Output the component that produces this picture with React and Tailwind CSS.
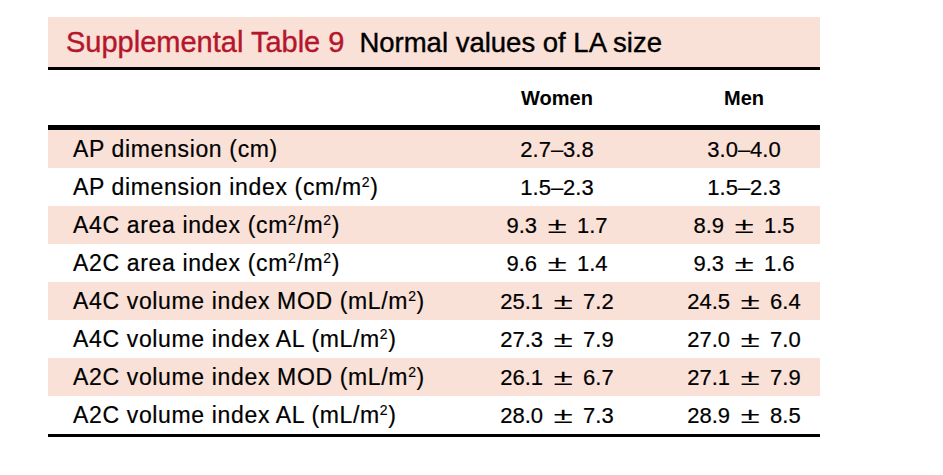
import React from 'react';

function Sup({ children }) {
  return <span className="relative -top-[8px] text-[14px] leading-none">{children}</span>;
}

// wide plus-minus sign, as in the source typesetting
function Pm({ a, b }) {
  return (
    <span className="tracking-normal">
      {a}
      <span className="inline-block w-[40px] text-center">
        <span className="inline-block scale-x-[1.6] [-webkit-text-stroke:0px]">±</span>
      </span>
      {b}
    </span>
  );
}

const rows = [
  { label: <>AP dimension (cm)</>, women: '2.7–3.8', men: '3.0–4.0' },
  { label: <>AP dimension index (cm/m<Sup>2</Sup>)</>, women: '1.5–2.3', men: '1.5–2.3' },
  { label: <>A4C area index (cm<Sup>2</Sup>/m<Sup>2</Sup>)</>, women: <Pm a="9.3" b="1.7" />, men: <Pm a="8.9" b="1.5" /> },
  { label: <>A2C area index (cm<Sup>2</Sup>/m<Sup>2</Sup>)</>, women: <Pm a="9.6" b="1.4" />, men: <Pm a="9.3" b="1.6" /> },
  { label: <>A4C volume index MOD (mL/m<Sup>2</Sup>)</>, women: <Pm a="25.1" b="7.2" />, men: <Pm a="24.5" b="6.4" /> },
  { label: <>A4C volume index AL (mL/m<Sup>2</Sup>)</>, women: <Pm a="27.3" b="7.9" />, men: <Pm a="27.0" b="7.0" /> },
  { label: <>A2C volume index MOD (mL/m<Sup>2</Sup>)</>, women: <Pm a="26.1" b="6.7" />, men: <Pm a="27.1" b="7.9" /> },
  { label: <>A2C volume index AL (mL/m<Sup>2</Sup>)</>, women: <Pm a="28.0" b="7.3" />, men: <Pm a="28.9" b="8.5" /> },
];

const App = () => {
  return (
    <div className="w-[943px] h-[475px] bg-white pt-[17px] pl-[48px] font-['Liberation_Sans',Arial,sans-serif] text-black [-webkit-text-stroke:0.2px_currentColor]">
      <div className="w-[772px]">
        {/* Title */}
        <div className="h-[50px] bg-[#fae1d7] flex items-center pl-[18px] pt-[2px] whitespace-nowrap [-webkit-text-stroke:0.4px_currentColor]">
          <span className="text-[#b5162b] text-[29px]">Supplemental Table 9</span>
          <span className="ml-[15px] text-[27.5px]">Normal values of LA size</span>
        </div>
        <div className="h-[3px] bg-black" />

        {/* Header */}
        <div className="grid grid-cols-[416px_186px_170px] h-[55px] items-center font-bold text-[20px] [-webkit-text-stroke:0px]">
          <div />
          <div className="text-center">Women</div>
          <div className="text-center pl-[18px]">Men</div>
        </div>
        <div className="h-[5px] bg-black" />

        {/* Rows */}
        {rows.map((r, i) => (
          <div
            key={i}
            className={`grid grid-cols-[416px_186px_170px] h-[38px] items-center text-[23px] ${i % 2 === 0 ? 'bg-[#fae1d7]' : 'bg-white'}`}
          >
            <div className="pl-[25px] whitespace-nowrap tracking-[0.65px]">{r.label}</div>
            <div className="text-center whitespace-nowrap text-[22px]">{r.women}</div>
            <div className="text-center pl-[18px] whitespace-nowrap text-[22px]">{r.men}</div>
          </div>
        ))}
        <div className="h-[3px] bg-black" />
      </div>
    </div>
  );
};

export default App;
